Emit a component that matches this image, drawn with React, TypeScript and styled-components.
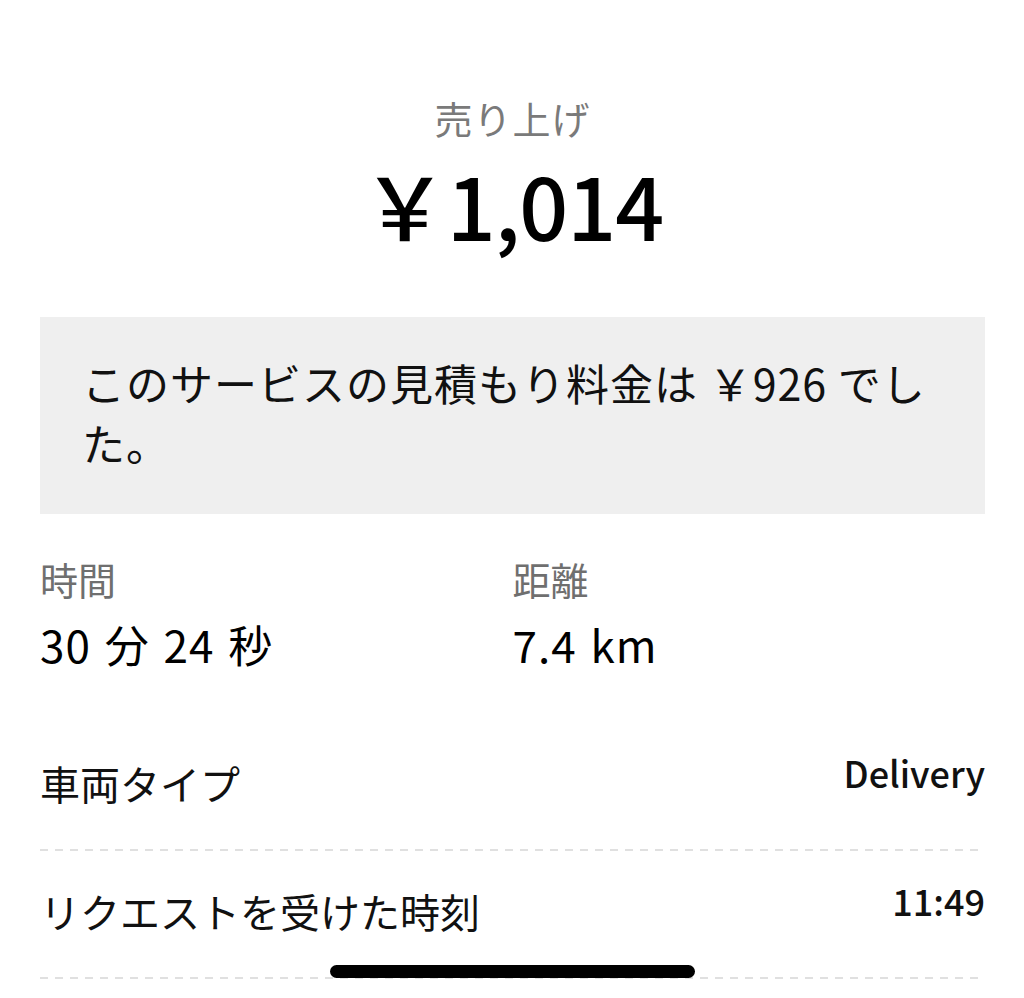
import React from "react";
import styled, { createGlobalStyle } from "styled-components";

const GlobalStyle = createGlobalStyle`
  html, body {
    margin: 0;
    padding: 0;
    background: #ffffff;
  }
  body {
    font-family: "Noto Sans CJK JP", "Noto Sans", sans-serif;
    color: #000;
  }
`;

const Page = styled.div`
  width: 1024px;
  height: 998px;
  overflow: hidden;
  padding: 0 39px 0 40px;
  box-sizing: border-box;
`;

const Header = styled.div`
  display: flex;
  flex-direction: column;
  align-items: center;
  padding-top: 92px;
`;

const Caption = styled.div`
  font-size: 38px;
  line-height: 52px;
  color: #7a7a7a;
  letter-spacing: 1px;
`;

const Amount = styled.div`
  margin-top: 10px;
  font-size: 86px;
  line-height: 100px;
  font-weight: 500;
  letter-spacing: -1px;
`;

const Notice = styled.div`
  margin-top: 63px;
  height: 197px;
  box-sizing: border-box;
  background: #efefef;
  padding: 35px 40px 0 42px;
  font-size: 43px;
  line-height: 60px;
  letter-spacing: 1px;
  color: #111;
`;

const Stats = styled.div`
  display: grid;
  grid-template-columns: 1fr 1fr;
  padding-top: 42px;
`;

const Stat = styled.div`
  display: flex;
  flex-direction: column;
`;

const StatLabel = styled.div`
  font-size: 38px;
  line-height: 46px;
  color: #6f6f6f;
`;

const StatValue = styled.div`
  margin-top: 17px;
  font-size: 44px;
  line-height: 50px;
  letter-spacing: 1px;
  word-spacing: 3px;
  color: #000;
`;

const List = styled.div`
  margin-top: 54px;
`;

const Row = styled.div`
  display: flex;
  justify-content: space-between;
  align-items: flex-start;
  height: 128px;
  padding-top: 2px;
  box-sizing: border-box;
  background-image: linear-gradient(to right, #e0e0e0 8px, transparent 8px);
  background-size: 15px 2px;
  background-repeat: repeat-x;
  background-position: left bottom 0;
`;

const RowLabel = styled.div<{ $top: number }>`
  margin-top: ${(p) => p.$top}px;
  font-size: 40px;
  line-height: 50px;
  color: #111;
`;

const RowValue = styled.div<{ $top: number }>`
  margin-top: ${(p) => p.$top}px;
  font-size: 36px;
  line-height: 44px;
  font-weight: 500;
  color: #111;
`;

const HomeIndicator = styled.div`
  position: fixed;
  left: 330px;
  top: 965px;
  width: 365px;
  height: 13px;
  border-radius: 7px;
  background: #000;
`;

const rows = [
  { label: "車両タイプ", value: "Delivery" },
  { label: "リクエストを受けた時刻", value: "11:49" },
];

export default function App() {
  return (
    <>
      <GlobalStyle />
      <Page>
        <Header>
          <Caption>売り上げ</Caption>
          <Amount>￥1,014</Amount>
        </Header>

        <Notice>このサービスの見積もり料金は ￥926 でした。</Notice>

        <Stats>
          <Stat>
            <StatLabel>時間</StatLabel>
            <StatValue>30 分 24 秒</StatValue>
          </Stat>
          <Stat>
            <StatLabel>距離</StatLabel>
            <StatValue>7.4 km</StatValue>
          </Stat>
        </Stats>

        <List>
          {rows.map((r) => (
            <Row key={r.label}>
              <RowLabel $top={33}>{r.label}</RowLabel>
              <RowValue $top={25}>{r.value}</RowValue>
            </Row>
          ))}
        </List>
      </Page>
      <HomeIndicator />
    </>
  );
}
